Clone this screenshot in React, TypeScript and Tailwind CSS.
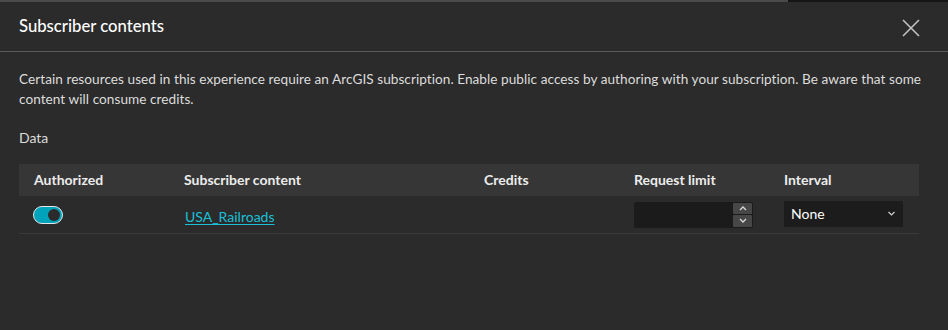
import React from "react";

export default function App() {
  return (
    <div className="w-[948px] h-[330px] bg-[#2b2b2b] overflow-hidden flex flex-col" style={{ fontFamily: "Lato, 'Noto Sans', sans-serif" }}>
      <div className="h-[2px] flex shrink-0">
        <div className="w-[788px] bg-[#4a4a4a]" />
        <div className="flex-1 bg-[#151515]" />
      </div>
      <div className="h-[50px] flex items-center justify-between pl-[19px] pr-[28px] border-b border-[#5a5a5a] shrink-0">
        <div className="text-[16.7px] text-white font-medium">Subscriber contents</div>
        <svg width="18" height="18" viewBox="0 0 18 18" className="mt-[2px]">
          <path d="M1 1 L17 17 M17 1 L1 17" stroke="#c2c2c2" strokeWidth="1.6" fill="none" />
        </svg>
      </div>
      <div className="px-[19px] pt-[17px]">
        <p className="text-[13.6px] leading-[20px] text-[#dcdcdc] tracking-[0.05px]">
          Certain resources used in this experience require an ArcGIS subscription. Enable public access by authoring with your subscription. Be aware that some content will consume credits.
        </p>
        <div className="mt-[19px] text-[14px] text-[#dcdcdc] leading-[20px]">Data</div>
        <div className="mt-[16px] w-[900px]">
          <div className="grid grid-cols-[150px_300px_150px_150px_150px] h-[32px] bg-[#363636] items-center text-[14px] font-bold text-[#ececec] pb-[2px]">
            <div className="pl-[15px]">Authorized</div>
            <div className="pl-[15px]">Subscriber content</div>
            <div className="pl-[15px]">Credits</div>
            <div className="pl-[15px]">Request limit</div>
            <div className="pl-[15px]">Interval</div>
          </div>
          <div className="grid grid-cols-[150px_300px_150px_150px_150px] h-[38px] items-center border-b border-[#3a3a3a] text-[14px]">
            <div className="pl-[14px]">
              <div className="w-[30px] h-[18px] rounded-full bg-[#00a3ba] border border-[#e6e6e6] flex items-center justify-end pr-[2px]">
                <div className="w-[12px] h-[12px] rounded-full bg-[#2b2b2b]" />
              </div>
            </div>
            <div className="pl-[16px] pt-[3px]">
              <span className="text-[#1ac0d8] underline underline-offset-2">USA_Railroads</span>
            </div>
            <div />
            <div className="pl-[15px]">
              <div className="w-[119px] h-[26px] bg-[#1b1b1b] rounded-[2px] flex justify-end">
                <div className="w-[20px] flex flex-col gap-[1px] py-[1px] pr-[1px]">
                  <div className="flex-1 bg-[#474747] flex items-center justify-center rounded-[1px]">
                    <svg width="8" height="5" viewBox="0 0 8 5"><path d="M1 4 L4 1 L7 4" stroke="#d8d8d8" strokeWidth="1.3" fill="none" /></svg>
                  </div>
                  <div className="flex-1 bg-[#474747] flex items-center justify-center rounded-[1px]">
                    <svg width="8" height="5" viewBox="0 0 8 5"><path d="M1 1 L4 4 L7 1" stroke="#d8d8d8" strokeWidth="1.3" fill="none" /></svg>
                  </div>
                </div>
              </div>
            </div>
            <div className="pl-[15px]">
              <div className="w-[119px] h-[26px] bg-[#1c1c1c] rounded-[2px] flex items-center justify-between pl-[7px] pr-[8px] -mt-[2px]">
                <span className="text-[14px] text-white">None</span>
                <svg width="7" height="5" viewBox="0 0 7 5"><path d="M0.5 1 L3.5 4 L6.5 1" stroke="#cfcfcf" strokeWidth="1.2" fill="none" /></svg>
              </div>
            </div>
          </div>
        </div>
      </div>
    </div>
  );
}
